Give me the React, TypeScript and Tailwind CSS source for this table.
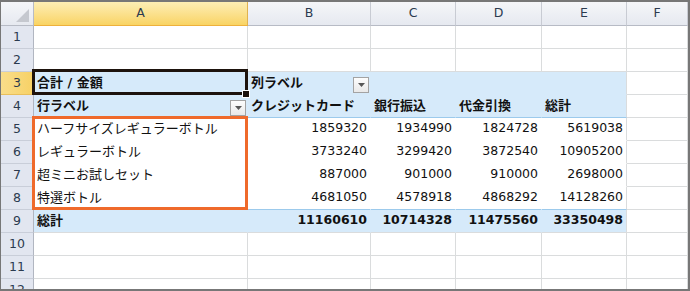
import React from "react";

const WA = "w-[214px]";
const WB = "w-[123px]";
const WC = "w-[85px]";
const WD = "w-[86px]";
const WE = "w-[85px]";
const WF = "w-[61px]";
const COLS = [WA, WB, WC, WD, WE, WF];

const PLAIN = "bg-white border-[#dadcdd]";
const BLUE = "bg-[#d6eafa] border-[#d6eafa]";
const BLUE_LINE = "bg-[#d6eafa] border-r-[#d6eafa] border-b-[#9ccaec]";
const BLUE_E = "bg-[#d6eafa] border-r-[#dadcdd] border-b-[#d6eafa]";
const BLUE_E_LINE = "bg-[#d6eafa] border-r-[#dadcdd] border-b-[#9ccaec]";
const BLUE_BOTTOM = "bg-[#d6eafa] border-r-[#d6eafa] border-b-[#dadcdd]";
const BLUE_E_BOTTOM = "bg-[#d6eafa] border-r-[#dadcdd] border-b-[#dadcdd]";
const WHITE = "bg-white border-white";
const WHITE_E = "bg-white border-r-[#dadcdd] border-b-white";
const WHITE_LINE = "bg-white border-r-white border-b-[#9ccaec]";
const WHITE_E_LINE = "bg-white border-r-[#dadcdd] border-b-[#9ccaec]";

function Cell({ w, cls, children }: { w: string; cls: string; children?: React.ReactNode }) {
  return <div className={`${w} h-full shrink-0 flex border-r border-b ${cls}`}>{children}</div>;
}

function RowHead({ n, sel }: { n: number; sel?: boolean }) {
  return (
    <div
      className={
        sel
          ? "w-[33px] h-full shrink-0 flex items-center justify-center border-r border-b border-r-[#e2ad45] border-b-[#e9bf5c] bg-linear-to-r from-[#f9dd8a] to-[#f7d165] text-[12.5px] text-[#2b3a4f]"
          : "w-[33px] h-full shrink-0 flex items-center justify-center border-r border-b border-r-[#b1b6c1] border-b-[#c9ced9] bg-[#e2e6f0] text-[12.5px] text-[#2b3a4f]"
      }
    >
      {n}
    </div>
  );
}

function Label({ children, bold }: { children: React.ReactNode; bold?: boolean }) {
  return (
    <span
      className={
        bold
          ? "self-center -translate-y-[1px] pl-[3px] text-[13px] leading-none font-bold text-[#111] whitespace-nowrap"
          : "self-center -translate-y-[1px] pl-[3px] text-[13px] leading-none text-[#111] whitespace-nowrap"
      }
    >
      {children}
    </span>
  );
}

function Num({ children, bold }: { children: React.ReactNode; bold?: boolean }) {
  return (
    <span
      className={
        bold
          ? "ml-auto self-center -translate-y-[1px] pr-[3px] text-[12.5px] leading-none font-bold text-[#111]"
          : "ml-auto self-center -translate-y-[1px] pr-[3px] text-[12.5px] leading-none text-[#111]"
      }
    >
      {children}
    </span>
  );
}

function Drop() {
  return (
    <div className="ml-auto mr-[1px] mb-[1px] self-end w-[16px] h-[16px] shrink-0 border border-[#a3a3a3] bg-linear-to-b from-[#fdfdfd] to-[#e9e9e9] flex items-center justify-center">
      <svg width="7" height="4" viewBox="0 0 7 4">
        <polygon points="0,0 7,0 3.5,4" fill="#575757" />
      </svg>
    </div>
  );
}

function PlainRow({ n }: { n: number }) {
  return (
    <div className="flex h-[23px] shrink-0">
      <RowHead n={n} />
      {COLS.map((w, i) => (
        <Cell key={i} w={w} cls={PLAIN} />
      ))}
    </div>
  );
}

const data: [string, string, string, string, string][] = [
  ["ハーフサイズレギュラーボトル", "1859320", "1934990", "1824728", "5619038"],
  ["レギュラーボトル", "3733240", "3299420", "3872540", "10905200"],
  ["超ミニお試しセット", "887000", "901000", "910000", "2698000"],
  ["特選ボトル", "4681050", "4578918", "4868292", "14128260"],
];

export default function App() {
  return (
    <div className="relative w-[690px] h-[291px] overflow-hidden bg-white font-['DejaVu_Sans','Noto_Sans_CJK_JP',sans-serif]">
      <div className="w-[690px] h-[291px] overflow-hidden border-t-2 border-l border-r-2 border-b-2 border-[#777777] flex flex-col">
        {/* column headers */}
        <div className="flex h-[24px] shrink-0">
          <div className="relative w-[33px] h-full shrink-0 border-r border-b border-r-[#b7bbc5] border-b-[#b7bbc5] bg-linear-to-b from-[#f5f6f9] to-[#e6e9f0]">
            <svg className="absolute left-0 top-0" width="32" height="23" viewBox="0 0 32 23">
              <polygon points="28,7 28,20 15,20" fill="#c5c8cf" />
            </svg>
          </div>
          <div className="w-[214px] h-full shrink-0 flex items-center justify-center border-r border-b border-r-[#e0b24f] border-b-[#eeb13c] bg-linear-to-b from-[#fdeeb4] to-[#f9d463] text-[12.5px] text-[#2b3a4f]">
            A
          </div>
          {[
            [WB, "B"],
            [WC, "C"],
            [WD, "D"],
            [WE, "E"],
            [WF, "F"],
          ].map(([w, l]) => (
            <div
              key={l}
              className={`${w} h-full shrink-0 flex items-center justify-center border-r border-b border-r-[#c8cbd3] border-b-[#b7bbc5] bg-linear-to-b from-[#f5f6f9] to-[#e6e9f0] text-[12.5px] text-[#2b3a4f]`}
            >
              {l}
            </div>
          ))}
        </div>

        <PlainRow n={1} />
        <PlainRow n={2} />

        {/* row 3 */}
        <div className="flex h-[23px] shrink-0">
          <RowHead n={3} sel />
          <Cell w={WA} cls={BLUE}>
            <Label bold>合計 / 金額</Label>
          </Cell>
          <Cell w={WB} cls={BLUE}>
            <Label bold>列ラベル</Label>
            <Drop />
          </Cell>
          <Cell w={WC} cls={BLUE} />
          <Cell w={WD} cls={BLUE} />
          <Cell w={WE} cls={BLUE_E} />
          <Cell w={WF} cls={PLAIN} />
        </div>

        {/* row 4 */}
        <div className="flex h-[23px] shrink-0">
          <RowHead n={4} />
          <Cell w={WA} cls={BLUE_LINE}>
            <Label bold>行ラベル</Label>
            <Drop />
          </Cell>
          <Cell w={WB} cls={BLUE_LINE}>
            <Label bold>クレジットカード</Label>
          </Cell>
          <Cell w={WC} cls={BLUE_LINE}>
            <Label bold>銀行振込</Label>
          </Cell>
          <Cell w={WD} cls={BLUE_LINE}>
            <Label bold>代金引換</Label>
          </Cell>
          <Cell w={WE} cls={BLUE_E_LINE}>
            <Label bold>総計</Label>
          </Cell>
          <Cell w={WF} cls={PLAIN} />
        </div>

        {/* rows 5-8 */}
        {data.map((r, i) => {
          const last = i === data.length - 1;
          return (
            <div key={i} className="flex h-[23px] shrink-0">
              <RowHead n={5 + i} />
              <Cell w={WA} cls={last ? WHITE_LINE : WHITE}>
                <Label>{r[0]}</Label>
              </Cell>
              <Cell w={WB} cls={last ? WHITE_LINE : WHITE}>
                <Num>{r[1]}</Num>
              </Cell>
              <Cell w={WC} cls={last ? WHITE_LINE : WHITE}>
                <Num>{r[2]}</Num>
              </Cell>
              <Cell w={WD} cls={last ? WHITE_LINE : WHITE}>
                <Num>{r[3]}</Num>
              </Cell>
              <Cell w={WE} cls={last ? WHITE_E_LINE : WHITE_E}>
                <Num>{r[4]}</Num>
              </Cell>
              <Cell w={WF} cls={PLAIN} />
            </div>
          );
        })}

        {/* row 9 */}
        <div className="flex h-[23px] shrink-0">
          <RowHead n={9} />
          <Cell w={WA} cls={BLUE_BOTTOM}>
            <Label bold>総計</Label>
          </Cell>
          <Cell w={WB} cls={BLUE_BOTTOM}>
            <Num bold>11160610</Num>
          </Cell>
          <Cell w={WC} cls={BLUE_BOTTOM}>
            <Num bold>10714328</Num>
          </Cell>
          <Cell w={WD} cls={BLUE_BOTTOM}>
            <Num bold>11475560</Num>
          </Cell>
          <Cell w={WE} cls={BLUE_E_BOTTOM}>
            <Num bold>33350498</Num>
          </Cell>
          <Cell w={WF} cls={PLAIN} />
        </div>

        <PlainRow n={10} />
        <PlainRow n={11} />
        <PlainRow n={12} />
      </div>

      {/* active cell A3 */}
      <div className="absolute left-[32px] top-[69px] w-[216px] h-[26px] border-[3px] border-[#1d130d]" />
      <div className="absolute left-[243px] top-[91px] w-[6px] h-[6px] bg-[#1d130d] outline outline-1 outline-white" />

      {/* orange highlight A5:A8 */}
      <div className="absolute left-[32px] top-[116px] w-[216px] h-[94px] border-[3px] border-[#ef6a2b]" />
    </div>
  );
}
